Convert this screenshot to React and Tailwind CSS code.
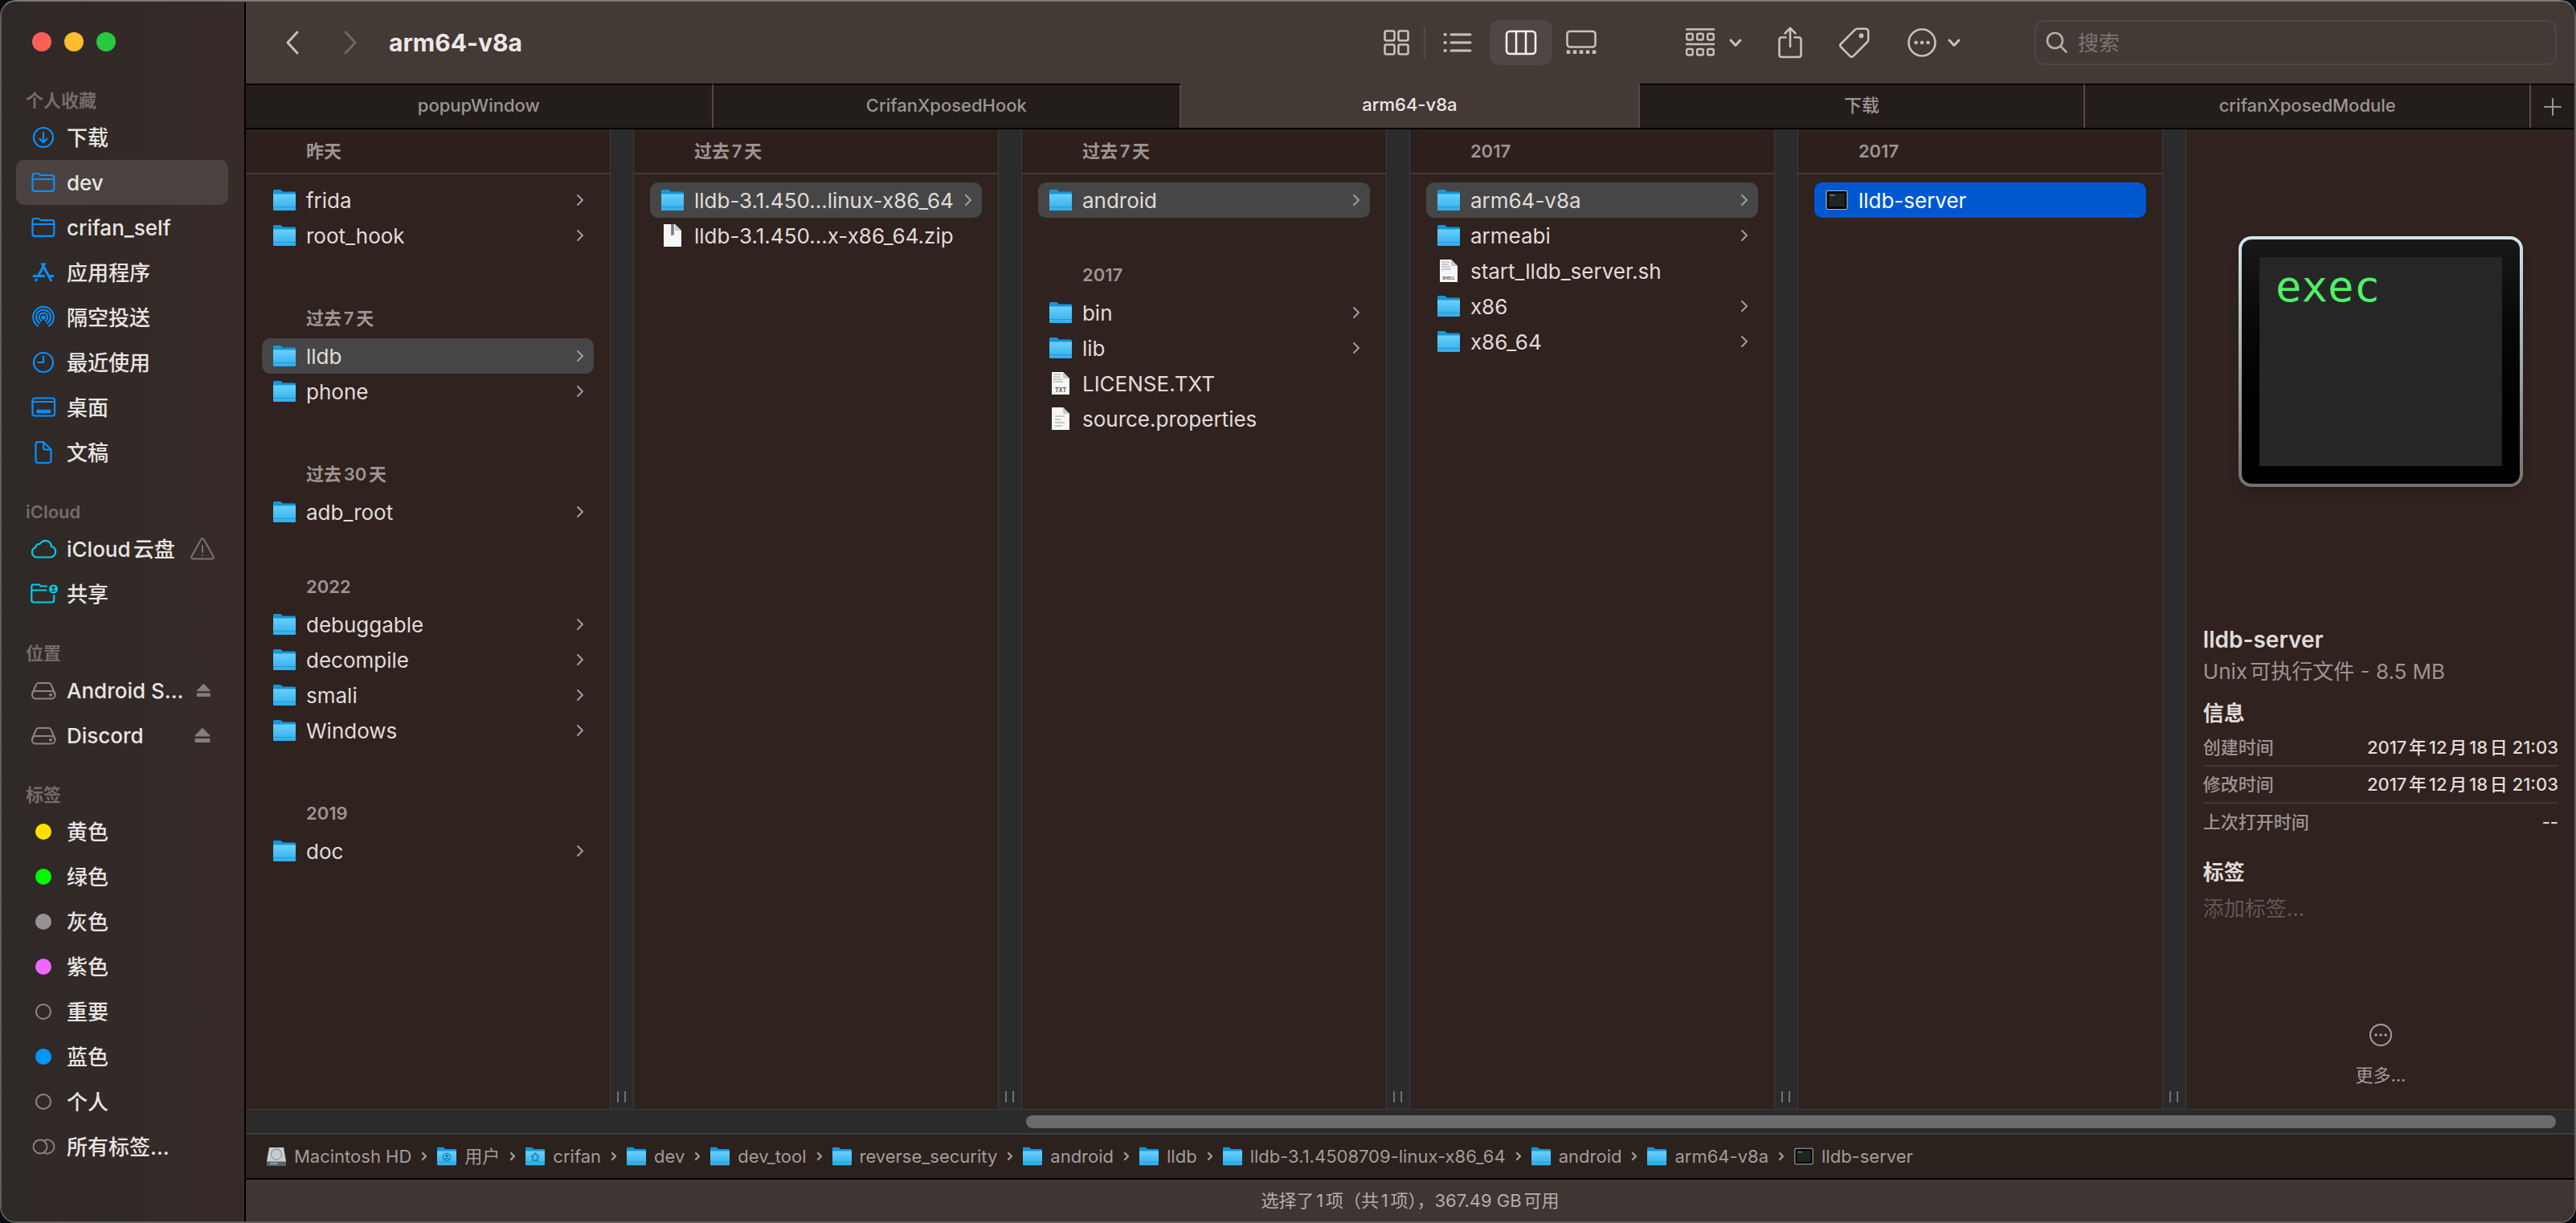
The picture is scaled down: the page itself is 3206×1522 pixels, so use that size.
const FONT = "font-['Inter','Noto_Sans_CJK_SC',sans-serif]";

/* ---------- sidebar icons ---------- */
const line = { fill: "none", stroke: "currentColor", strokeLinecap: "round", strokeLinejoin: "round" };

function SideIcon({ name }) {
  const common = { className: "size-9 shrink-0", viewBox: "0 0 36 36", strokeWidth: 2.2, ...line, "aria-hidden": true };
  switch (name) {
    case "download":
      return (
        <svg {...common}>
          <circle cx="18" cy="18" r="12" />
          <path d="M18 12v12M13.5 19.8 18 24.2l4.500-4.400" />
        </svg>
      );
    case "folder":
      return (
        <svg {...common}>
          <path d="M4.500 26V9.500q0-2.500 2.500-2.500h5l2.500 2h14q2.800 0 2.800 2.800V26q0 2.800-2.800 2.800H7.300Q4.500 28.800 4.500 26zM4.500 14h26.700" />
        </svg>
      );
    case "apps":
      return (
        <svg {...common} strokeWidth="3">
          <path d="M16.500 7.500l11 20.500M19.500 7.500 12.300 21M6 22.500h12.500M24.500 22.500H30M9.400 26.800l-.7 1.200" />
        </svg>
      );
    case "airdrop":
      return (
        <svg {...common} strokeWidth="2">
          <path d="M11.200 28.500a12.800 12.800 0 1 1 13.600 0M13.200 25.200a9 9 0 1 1 9.600 0M15.400 22.300a5.300 5.300 0 1 1 5.200 0" />
          <circle cx="18" cy="18" r="1.600" fill="currentColor" />
        </svg>
      );
    case "recent":
      return (
        <svg {...common}>
          <circle cx="18" cy="18" r="12" />
          <path d="M18 10.500V18h-6.500" />
        </svg>
      );
    case "desktop":
      return (
        <svg {...common}>
          <rect x="4.500" y="6.500" width="27.500" height="22" rx="2.500" />
          <path d="M4.500 11h27.500" />
          <rect x="10" y="21.500" width="16.500" height="3" fill="currentColor" strokeWidth="1.500" />
        </svg>
      );
    case "document":
      return (
        <svg {...common}>
          <path d="M8.500 8q0-3 3-3H18l9.500 9.500V28q0 3-3 3h-13q-3 0-3-3zM18 5v7q0 2.500 2.500 2.500h7" />
        </svg>
      );
    case "cloud":
      return (
        <svg {...common}>
          <path d="M9.500 28.500a6.300 6.300 0 0 1-1.300-12.200q.7-4.600 5.400-4.300 2.400-4.200 7-4.200 6.600.4 7.300 7.200 5.300 1.300 5.300 6.700-.6 6.300-6.500 6.800z" />
        </svg>
      );
    case "shared":
      return (
        <svg {...common}>
          <path d="M22 8.500h-7l-2.500-2H6Q3.300 6.500 3.300 9v17q0 2.500 2.700 2.500h22.500q2.700 0 2.700-2.500v-6M3.300 13.500h18" />
          <circle cx="30.500" cy="12" r="5.500" fill="currentColor" stroke="none" />
          <circle cx="30.500" cy="10.400" r="1.900" fill="#322a27" stroke="none" />
          <path d="M27.300 15q3.200-3.600 6.400 0z" fill="#322a27" stroke="none" />
        </svg>
      );
    case "disk":
      return (
        <svg {...common} strokeWidth="2">
          <path d="M4 22.500 9 11q.8-2 3-2h12.500q2.200 0 3 2l5 11.500" />
          <rect x="4" y="19" width="28.500" height="9.500" rx="4.500" />
          <circle cx="27" cy="23.700" r="1" fill="currentColor" />
        </svg>
      );
    case "alltags":
      return (
        <svg {...common} strokeWidth="1.800">
          <circle cx="14" cy="18" r="8.500" />
          <path d="M19.500 10.200a8.500 8.500 0 1 1 0 15.600" />
        </svg>
      );
    default:
      return null;
  }
}

function Dot({ color }) {
  return (
    <span className="flex size-9 shrink-0 items-center justify-center">
      <span className={`size-5 rounded-full ${color}`} />
    </span>
  );
}

function WarningIcon() {
  return (
    <svg className="size-8 text-[#7b726f]" viewBox="0 0 32 32" strokeWidth="2" {...line} aria-hidden="true">
      <path d="M14.200 4.500q1.800-2.800 3.600 0l11.600 20.700q1.200 2.800-1.800 3.300H4.400q-3-.5-1.800-3.300zM16 12v8M16 23.800v.2" />
    </svg>
  );
}

function EjectIcon() {
  return (
    <svg className="size-8 text-[#867d79]" viewBox="0 0 32 32" fill="currentColor" aria-hidden="true">
      <path d="M15.300 7.300q.7-.6 1.400 0l8.600 9q.7 1.200-.6 1.200H7.300q-1.300 0-.6-1.200z" />
      <rect x="6.500" y="20" width="19" height="5" rx="1" />
    </svg>
  );
}

const SIDEBAR = [
  {
    title: "个人收藏",
    tint: "text-[#0a8fff]",
    items: [
      { label: "下载", icon: "download" },
      { label: "dev", icon: "folder", active: true },
      { label: "crifan_self", icon: "folder" },
      { label: "应用程序", icon: "apps" },
      { label: "隔空投送", icon: "airdrop" },
      { label: "最近使用", icon: "recent" },
      { label: "桌面", icon: "desktop" },
      { label: "文稿", icon: "document" },
    ],
  },
  {
    title: "iCloud",
    tint: "text-[#00cfe6]",
    items: [
      { label: "iCloud云盘", icon: "cloud", trailing: "warning" },
      { label: "共享", icon: "shared" },
    ],
  },
  {
    title: "位置",
    tint: "text-[#8d8582]",
    items: [
      { label: "Android S...", icon: "disk", trailing: "eject" },
      { label: "Discord", icon: "disk", trailing: "eject" },
    ],
  },
  {
    title: "标签",
    tint: "text-[#8d8582]",
    items: [
      { label: "黄色", dot: "bg-[#ffe000]" },
      { label: "绿色", dot: "bg-[#00f900]" },
      { label: "灰色", dot: "bg-[#989298]" },
      { label: "紫色", dot: "bg-[#ee67ff]" },
      { label: "重要", dot: "border-2 border-[#8f8784]" },
      { label: "蓝色", dot: "bg-[#0096ff]" },
      { label: "个人", dot: "border-2 border-[#8f8784]" },
      { label: "所有标签...", icon: "alltags" },
    ],
  },
];

function Sidebar() {
  return (
    <aside className="flex w-[304px] shrink-0 flex-col border-r-2 border-black bg-linear-to-r from-[#2e2927] to-[#372b28] pr-5 pl-[18px]">
      <div className="flex h-[105px] items-start gap-4 pt-[38px] pl-5">
        <button aria-label="关闭" className="size-6 rounded-full bg-[#ff5f57]" />
        <button aria-label="最小化" className="size-6 rounded-full bg-[#febc2e]" />
        <button aria-label="缩放" className="size-6 rounded-full bg-[#28c840]" />
      </div>
      <nav className="flex flex-col gap-7">
        {SIDEBAR.map((section) => (
          <section key={section.title}>
            <h2 className="flex h-9 items-center pl-3 text-[22px] font-semibold text-[#756c69]">{section.title}</h2>
            <ul>
              {section.items.map((item) => (
                <li key={item.label}>
                  <a
                    href="#"
                    className={`flex h-14 items-center gap-[11px] rounded-[10px] pr-4 pl-4 text-[26px] font-medium whitespace-nowrap text-[#e9e5e3] ${item.active ? "bg-[#494240]" : ""}`}
                  >
                    <span className={section.tint}>{item.dot ? <Dot color={item.dot} /> : <SideIcon name={item.icon} />}</span>
                    <span className="grow">{item.label}</span>
                    {item.trailing === "warning" && <WarningIcon />}
                    {item.trailing === "eject" && <EjectIcon />}
                  </a>
                </li>
              ))}
            </ul>
          </section>
        ))}
      </nav>
    </aside>
  );
}

/* ---------- toolbar ---------- */
function Chevron({ dir, className }) {
  const d = { left: "M15 3 3 16l12 13", right: "M3 3l12 13L3 29" }[dir];
  return (
    <svg className={className} viewBox="0 0 18 32" strokeWidth="3" {...line} aria-hidden="true">
      <path d={d} />
    </svg>
  );
}

function ChevronDown() {
  return (
    <svg className="h-4 w-4" viewBox="0 0 16 16" strokeWidth="3" {...line} aria-hidden="true">
      <path d="M2 5l6 6.500L14 5" />
    </svg>
  );
}

function ToolIcon({ name }) {
  const common = { className: "size-10 shrink-0", viewBox: "0 0 40 40", strokeWidth: 2.6, ...line, "aria-hidden": true };
  switch (name) {
    case "grid":
      return (
        <svg {...common}>
          <rect x="5.500" y="5.500" width="12" height="12" rx="2" />
          <rect x="22.500" y="5.500" width="12" height="12" rx="2" />
          <rect x="5.500" y="22.500" width="12" height="12" rx="2" />
          <rect x="22.500" y="22.500" width="12" height="12" rx="2" />
        </svg>
      );
    case "list":
      return (
        <svg {...common}>
          <path d="M12 10h24M12 20h24M12 30h24" strokeWidth="3" />
          <path d="M4.500 10h.2M4.500 20h.2M4.500 30h.2" strokeWidth="4" />
        </svg>
      );
    case "columns":
      return (
        <svg {...common}>
          <rect x="2" y="6" width="36" height="28" rx="4" />
          <path d="M14 6v28M26 6v28" />
        </svg>
      );
    case "gallery":
      return (
        <svg {...common}>
          <rect x="2.500" y="6" width="35" height="19.500" rx="3.500" />
          <path d="M4 29.500v4.500M12 29.500v4.500M20 29.500v4.500M28 29.500v4.500M36 29.500v4.500" strokeLinecap="butt" strokeWidth="4.500" />
        </svg>
      );
    case "group":
      return (
        <svg {...common} strokeWidth="2.400">
          <path d="M3 3.500h34M3 22h34" />
          <rect x="3.200" y="9" width="7.500" height="7.500" rx="1.500" />
          <rect x="16.200" y="9" width="7.500" height="7.500" rx="1.500" />
          <rect x="29.200" y="9" width="7.500" height="7.500" rx="1.500" />
          <rect x="3.200" y="28" width="7.500" height="7.500" rx="1.500" />
          <rect x="16.200" y="28" width="7.500" height="7.500" rx="1.500" />
          <rect x="29.200" y="28" width="7.500" height="7.500" rx="1.500" />
        </svg>
      );
    case "share":
      return (
        <svg {...common}>
          <path d="M14.500 13.500H9.500q-3 0-3 3V35q0 3 3 3h21q3 0 3-3V16.500q0-3-3-3h-5M20 25V2.500M13.500 8.500 20 2l6.500 6.500" />
        </svg>
      );
    case "tag":
      return (
        <svg {...common}>
          <path d="M3.200 21.500 20.500 4.200Q22 2.800 24 2.800h9.500q3.700 0 3.700 3.700V16q0 2-1.400 3.500L18.500 36.800q-2 2-4 0L3.200 25.500q-2-2 0-4z" />
          <circle cx="28.500" cy="11.500" r="1.600" fill="currentColor" />
        </svg>
      );
    case "more":
      return (
        <svg {...common}>
          <circle cx="20" cy="20" r="16.500" />
          <path d="M12.500 20h.1M20 20h.1M27.500 20h.1" strokeWidth="4.500" />
        </svg>
      );
    default:
      return null;
  }
}

function Toolbar() {
  return (
    <header className="flex h-[102px] shrink-0 items-center bg-[#433935] pr-[22px] pl-[42px] text-[#c9bfbb]">
      <button aria-label="后退" className="flex w-8 justify-center">
        <Chevron dir="left" className="h-8 w-[18px]" />
      </button>
      <button aria-label="前进" className="ml-10 flex w-8 justify-center text-[#6f6562]">
        <Chevron dir="right" className="h-8 w-[18px]" />
      </button>
      <h1 className="ml-8 grow text-[30px] font-bold text-[#ece8e6]">arm64-v8a</h1>

      <div className="flex items-center" role="group" aria-label="显示方式">
        <button aria-label="图标" className="flex h-14 w-[68px] items-center justify-center"><ToolIcon name="grid" /></button>
        <span className="h-10 w-0.5 bg-[#524845]" />
        <button aria-label="列表" className="flex h-14 w-20 items-center justify-center"><ToolIcon name="list" /></button>
        <button aria-label="分栏" aria-pressed="true" className="flex h-14 w-[78px] items-center justify-center rounded-xl bg-[#504643] text-[#f3efed]"><ToolIcon name="columns" /></button>
        <button aria-label="画廊" className="flex h-14 w-[72px] items-center justify-center"><ToolIcon name="gallery" /></button>
      </div>

      <button aria-label="分组" className="ml-[92px] flex items-center gap-4"><ToolIcon name="group" /><ChevronDown /></button>
      <button aria-label="共享" className="ml-10"><ToolIcon name="share" /></button>
      <button aria-label="编辑标签" className="ml-10"><ToolIcon name="tag" /></button>
      <button aria-label="更多" className="ml-11 flex items-center gap-3"><ToolIcon name="more" /><ChevronDown /></button>

      <label className="ml-[92px] flex h-14 w-[650px] items-center gap-3 rounded-xl border-2 border-[#504643] px-3">
        <svg className="size-7 shrink-0 text-[#b8aeaa]" viewBox="0 0 28 28" strokeWidth="2.600" {...line} aria-hidden="true">
          <circle cx="11.500" cy="11.500" r="9.500" />
          <path d="M18.500 18.500l7 7" />
        </svg>
        <input type="search" aria-label="搜索" placeholder="搜索" className="min-w-0 grow bg-transparent text-[26px] outline-none placeholder:text-[#7d7370]" />
      </label>
    </header>
  );
}

const TABS = [
  { label: "popupWindow", grow: "grow-[582]" },
  { label: "CrifanXposedHook", grow: "grow-[583]" },
  { label: "arm64-v8a", grow: "grow-[571]", active: true },
  { label: "下载", grow: "grow-[555]" },
  { label: "crifanXposedModule", grow: "grow-[555]" },
];

function TabBar() {
  return (
    <div role="tablist" className="flex h-[57px] shrink-0 border-b-2 border-black bg-[#231e1b] text-[22px] font-medium text-[#9c9592]">
      {TABS.map((tab) => (
        <button
          key={tab.label}
          role="tab"
          aria-selected={Boolean(tab.active)}
          className={`basis-0 border-r-2 border-[#524a47] pb-0.5 ${tab.grow} ${tab.active ? "bg-[#433935] text-[#ece8e6]" : "border-t-2 border-t-black"}`}
        >
          {tab.label}
        </button>
      ))}
      <button aria-label="新建标签页" className="flex w-[54px] items-center justify-center border-t-2 border-black">
        <svg className="size-6" viewBox="0 0 24 24" strokeWidth="2" {...line} aria-hidden="true">
          <path d="M12 2v20M2 12h20" />
        </svg>
      </button>
    </div>
  );
}

/* ---------- file icons ---------- */
function FolderIcon({ className = "size-7", badge }) {
  return (
    <svg className={`${className} shrink-0`} viewBox="0 0 28 28" aria-hidden="true">
      <defs>
        <linearGradient id="folderFront" x1="0" y1="0" x2="0" y2="1">
          <stop offset="0" stopColor="#69d0fd" />
          <stop offset="1" stopColor="#2fadea" />
        </linearGradient>
      </defs>
      <path d="M0 2.500Q0 1 1.500 1h7q1 0 1.700.7L12 3.500h14.500Q28 3.500 28 5v21.500H0z" fill="#1496d8" />
      <path d="M0 6.500h28v19q0 1.500-1.500 1.500h-25Q0 27 0 25.500z" fill="url(#folderFront)" />
      <path d="M0 22.500h28" stroke="#2298d4" strokeWidth="1" />
      {badge === "user" && (
        <g stroke="#1783bd" strokeWidth="1.600" fill="none">
          <circle cx="14" cy="15" r="5.500" />
          <circle cx="14" cy="13.500" r="1.500" fill="#1783bd" />
          <path d="M10.500 18.500q3.500-3 7 0" />
        </g>
      )}
      {badge === "home" && <path d="M8.500 15 14 9.500l5.500 5.500M10.500 14v6h7v-6" stroke="#1783bd" strokeWidth="1.800" fill="none" />}
    </svg>
  );
}

function FileIcon({ kind }) {
  return (
    <svg className="size-7 shrink-0" viewBox="0 0 28 28" aria-hidden="true">
      <path d="M3 0h14l8 8v20H3z" fill="#f6f6f6" />
      <path d="M17 0v8h8z" fill="#c9c9c9" />
      {kind === "zip" && (
        <g>
          <path d="M12 0h4v14h-4z" fill="#8b9196" />
          <path d="M14 1v10" stroke="#4d5357" strokeWidth="1.500" strokeDasharray="1.500 1.500" />
        </g>
      )}
      {kind === "text" && <path d="M7 11h12M7 15h7M7 19h12M7 23h9" stroke="#b9b9b9" strokeWidth="1.400" />}
      {(kind === "txt" || kind === "shell") && (
        <g>
          <path d="M5 3h10M5 6h9M5 9h11M5 12h12" stroke="#bdbdbd" strokeWidth="1.600" />
          <text x="14" y="25" textAnchor="middle" fontSize={kind === "txt" ? 7 : 5} fontWeight="700" fill="#555">
            {kind === "txt" ? "TXT" : "SHELL"}
          </text>
        </g>
      )}
    </svg>
  );
}

function ExecIcon({ className = "size-7" }) {
  return (
    <svg className={`${className} shrink-0`} viewBox="0 0 28 28" aria-hidden="true">
      <rect x="1" y="2.500" width="26" height="23" rx="1.500" fill="#000" stroke="#a9b8be" strokeWidth="1.200" />
      <rect x="4" y="5.500" width="20" height="17" fill="#232323" />
      <path d="M5.500 8h6" stroke="#3fae50" strokeWidth="1.400" />
    </svg>
  );
}

function DriveIcon() {
  return (
    <svg className="size-6 shrink-0" viewBox="0 0 24 24" aria-hidden="true">
      <path d="M3 1h18l3 17v4q0 1.500-1.500 1.500h-21Q0 23.500 0 22v-4z" fill="#c5cdd0" />
      <path d="M0 18.500h24V22q0 1.500-1.500 1.500h-21Q0 23.500 0 22z" fill="#59636a" />
      <circle cx="12" cy="9.500" r="6.500" fill="none" stroke="#8e999e" strokeWidth="1.300" />
      <path d="M4 21h10" stroke="#a8b2b6" strokeWidth="1.500" />
    </svg>
  );
}

function EntryIcon({ kind }) {
  if (kind === "folder") return <FolderIcon />;
  if (kind === "exec") return <ExecIcon />;
  return <FileIcon kind={kind} />;
}

/* ---------- browser columns ---------- */
const COLUMNS = [
  [
    { title: "昨天", items: [["frida", "folder"], ["root_hook", "folder"]] },
    { title: "过去7天", items: [["lldb", "folder", "path"], ["phone", "folder"]] },
    { title: "过去30天", items: [["adb_root", "folder"]] },
    { title: "2022", items: [["debuggable", "folder"], ["decompile", "folder"], ["smali", "folder"], ["Windows", "folder"]] },
    { title: "2019", items: [["doc", "folder"]] },
  ],
  [{ title: "过去7天", items: [["lldb-3.1.450...linux-x86_64", "folder", "path"], ["lldb-3.1.450...x-x86_64.zip", "zip"]] }],
  [
    { title: "过去7天", items: [["android", "folder", "path"]] },
    { title: "2017", items: [["bin", "folder"], ["lib", "folder"], ["LICENSE.TXT", "txt"], ["source.properties", "text"]] },
  ],
  [
    {
      title: "2017",
      items: [["arm64-v8a", "folder", "path"], ["armeabi", "folder"], ["start_lldb_server.sh", "shell"], ["x86", "folder"], ["x86_64", "folder"]],
    },
  ],
  [{ title: "2017", items: [["lldb-server", "exec", "focus"]] }],
];

const ROW_STATE = { path: "bg-[#464646]", focus: "bg-[#0058d0] text-white" };

function Row({ item: [name, kind, state] }) {
  return (
    <li>
      <button
        className={`flex h-11 w-full items-center gap-[13px] rounded-[10px] pr-3 pl-3.5 text-left text-[26px] whitespace-nowrap ${ROW_STATE[state] ?? ""}`}
      >
        <EntryIcon kind={kind} />
        <span className="grow">{name}</span>
        {kind === "folder" && (
          <svg className="h-4 w-2.5 shrink-0 text-[#a39c99]" viewBox="0 0 10 16" strokeWidth="2" {...line} aria-hidden="true">
            <path d="M2 2l6 6-6 6" />
          </svg>
        )}
      </button>
    </li>
  );
}

function Column({ groups }) {
  return (
    <section className="min-w-0 grow-[460] basis-0">
      {groups.map((group, i) => (
        <div key={group.title} className={group.items.length > 1 ? "pb-14" : "pb-[46px]"}>
          <h3
            className={`flex items-center pl-[75px] text-[22px] font-semibold text-[#9d9592] ${i === 0 ? "mb-2.5 h-14 border-b-2 border-[#463a37] bg-[#2d201c]" : "h-[50px]"}`}
          >
            {group.title}
          </h3>
          <ul className="px-5">
            {group.items.map((item) => (
              <Row key={item[0]} item={item} />
            ))}
          </ul>
        </div>
      ))}
    </section>
  );
}

function Gutter() {
  return (
    <div className="flex w-[30px] shrink-0 items-end justify-center gap-[7px] border-x border-[#3d3d3d] bg-[#2b2b2b] pb-2">
      <span className="h-3.5 w-0.5 bg-[#707070]" />
      <span className="h-3.5 w-0.5 bg-[#707070]" />
    </div>
  );
}

/* ---------- preview ---------- */
function Preview() {
  const rows = [
    ["创建时间", "2017年12月18日 21:03"],
    ["修改时间", "2017年12月18日 21:03"],
    ["上次打开时间", "--"],
  ];
  return (
    <section className="flex min-w-0 grow-[449] basis-0 flex-col pt-[133px] pr-5 pl-[21px]">
      <div className="mx-auto flex h-[312px] w-[354px] rounded-[16px] bg-linear-to-b from-[#d2e6ee] to-[#72716f] p-1 shadow-lg">
        <div className="flex grow rounded-[12px] bg-linear-to-b from-[#181818] to-black px-[22px] pt-[22px] pb-[22px]">
          <div className="grow bg-[#262626] pt-1 pl-5 font-['DejaVu_Sans_Mono',monospace] text-[54px] leading-[66px] text-[#4df267]">exec</div>
        </div>
      </div>
      <h2 className="mt-[170px] text-[28px] leading-10 font-semibold">lldb-server</h2>
      <p className="text-[26px] leading-10 text-[#9d9592]">Unix可执行文件 - 8.5 MB</p>
      <h3 className="mt-3 text-[26px] leading-10 font-bold">信息</h3>
      <dl className="flex flex-col">
        {rows.map(([k, v], i) => (
          <div key={k} className={`flex h-[46px] items-center justify-between text-[22px] font-medium whitespace-nowrap ${i < 2 ? "border-b-2 border-[#433532]" : ""}`}>
            <dt className="text-[#9d9592]">{k}</dt>
            <dd>{v}</dd>
          </div>
        ))}
      </dl>
      <h3 className="mt-5 text-[26px] leading-10 font-bold">标签</h3>
      <input aria-label="添加标签" placeholder="添加标签..." className="mt-1 h-10 bg-transparent text-[26px] outline-none placeholder:text-[#645653]" />
      <button className="mx-auto mt-auto mb-6 flex flex-col items-center gap-4 text-[22px] leading-9 text-[#a39c99]">
        <svg className="size-8" viewBox="0 0 32 32" strokeWidth="2" {...line} aria-hidden="true">
          <circle cx="16" cy="16" r="13" />
          <path d="M10 16h.1M16 16h.1M22 16h.1" strokeWidth="3.500" />
        </svg>
        更多...
      </button>
    </section>
  );
}

/* ---------- bottom bars ---------- */
const PATH = [
  ["Macintosh HD", "drive"],
  ["用户", "user"],
  ["crifan", "home"],
  ["dev"],
  ["dev_tool"],
  ["reverse_security"],
  ["android"],
  ["lldb"],
  ["lldb-3.1.4508709-linux-x86_64"],
  ["android"],
  ["arm64-v8a"],
  ["lldb-server", "exec"],
];

function PathIcon({ kind }) {
  if (kind === "drive") return <DriveIcon />;
  if (kind === "exec") return <ExecIcon className="size-6" />;
  return <FolderIcon className="size-6" badge={kind} />;
}

function PathBar() {
  return (
    <ol className="flex h-[58px] shrink-0 items-center gap-3 border-t-2 border-b-2 border-t-[#463b38] border-b-black bg-[#2b211d] px-[26px] text-[22px] text-[#a39c99]">
      {PATH.map(([name, kind], i) => (
        <li key={i} className="flex items-center gap-3 whitespace-nowrap">
          <a href="#" className="flex items-center gap-2.5">
            <PathIcon kind={kind} />
            {name}
          </a>
          {i < PATH.length - 1 && (
            <svg className="h-3 w-2" viewBox="0 0 8 12" strokeWidth="2.400" {...line} aria-hidden="true">
              <path d="M2 2l4 4-4 4" />
            </svg>
          )}
        </li>
      ))}
    </ol>
  );
}

export default function App() {
  return (
    <div className="min-h-screen bg-[#0b0d12]">
      <div className={`flex min-h-screen overflow-hidden rounded-[20px] border-2 border-[#625d5b] border-t-[#7c7876] text-[#e0dcda] [text-autospace:normal] ${FONT}`}>
        <Sidebar />
        <main className="flex min-w-0 grow flex-col bg-[#2f221f]">
          <Toolbar />
          <TabBar />
          <div className="flex grow">
            {COLUMNS.map((groups, i) => [<Column key={`c${i}`} groups={groups} />, <Gutter key={`g${i}`} />])}
            <Preview />
          </div>
          <div className="flex h-[30px] shrink-0 items-center border-t border-[#3d3d3d] bg-[#2b2b2b]">
            <div className="mr-[23px] ml-[33.5%] h-4 grow rounded-full bg-[#6b6b6b]" />
          </div>
          <PathBar />
          <footer className="flex h-[52px] shrink-0 items-center justify-center bg-[#3f3533] text-[22px] text-[#b5adaa]">
            选择了1项（共1项），367.49 GB可用
          </footer>
        </main>
      </div>
    </div>
  );
}
